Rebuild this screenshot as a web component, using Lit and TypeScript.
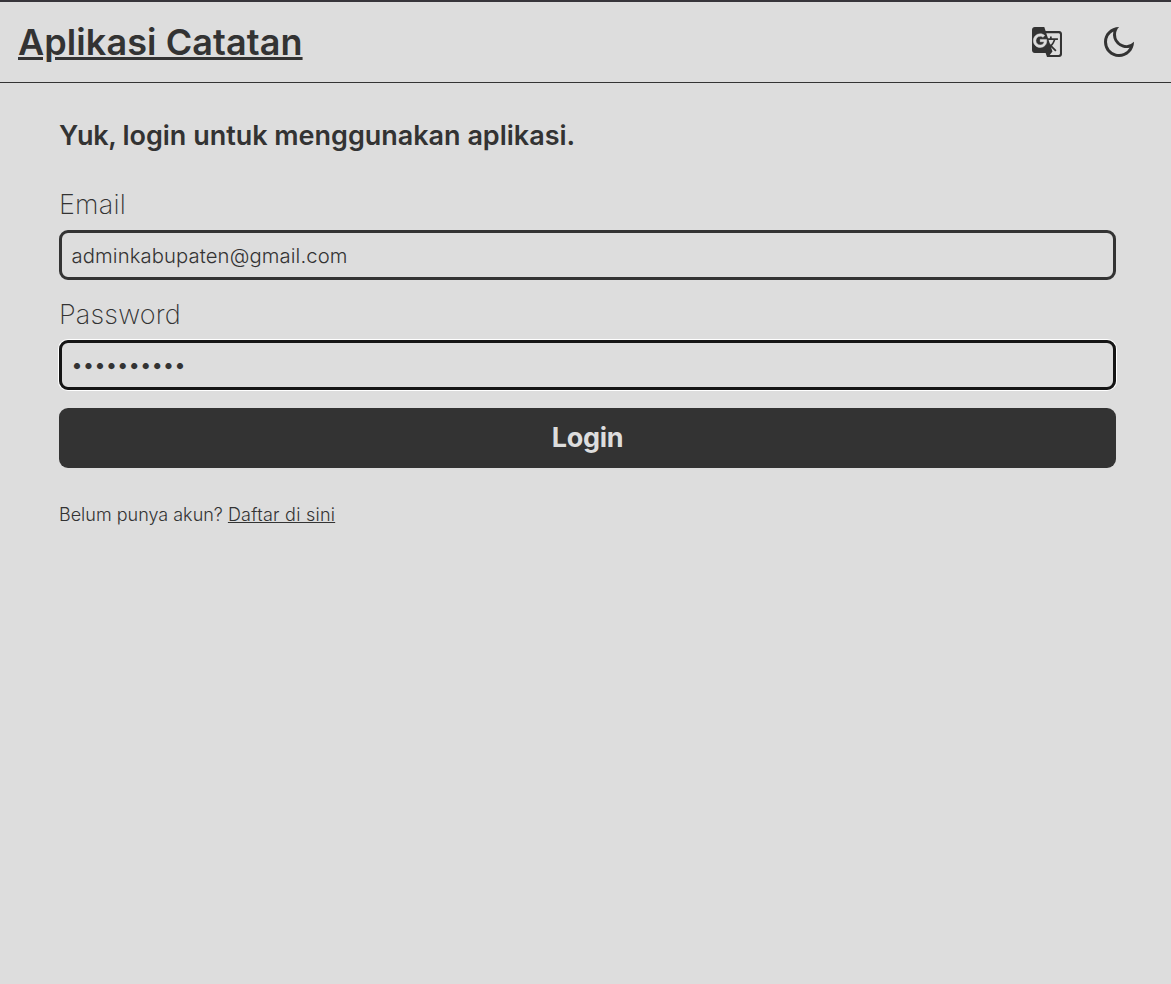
import { LitElement, html, css } from "lit";
import { customElement, state } from "lit/decorators.js";

@customElement("app-header")
class AppHeader extends LitElement {
  static styles = css`
    :host { display: block; }
    .bar {
      box-sizing: border-box;
      height: 83px;
      padding: 0 34px 0 18px;
      border-top: 2px solid #37353a;
      border-bottom: 1px solid #333;
      display: flex;
      align-items: center;
      justify-content: space-between;
    }
    .title { margin: 0; font-size: 36px; line-height: 44px; font-weight: 600; letter-spacing: 0.08px; }
    .title a { color: inherit; }
    .actions { display: flex; gap: 36px; }
    .icon {
      display: block;
      padding: 0;
      border: 0;
      background: none;
      color: inherit;
      width: 36px;
      height: 36px;
    }
    svg { display: block; width: 36px; height: 36px; fill: currentColor; }
    .glyph { fill: #ddd; stroke: #ddd; stroke-width: 0.35; }
  `;

  render() {
    return html`
      <header class="bar">
        <h1 class="title"><a href="#">Aplikasi Catatan</a></h1>
        <nav class="actions">
          <button class="icon">
            <svg viewBox="-1.2 -1.2 26.4 26.4">
              <path d="M21 4H11l-1-3H3c-1.1 0-2 .9-2 2v15c0 1.1.9 2 2 2h8l1 3h9c1.1 0 2-.9 2-2V6c0-1.1-.9-2-2-2zm-7.83 6.58h3.7c-.43 1.25-1.11 2.43-2.05 3.47-.31-.35-.6-.72-.86-1.1l-.79-2.37zm8.33 9.92c0 .55-.45 1-1 1H14l2-2.5-1.04-3.1 3.1 3.1.92-.92-3.3-3.25.02-.02c1.13-1.25 1.93-2.69 2.4-4.22H20v-1.3h-4.53V8h-1.29v1.29h-1.44L11.46 5.5h9.04c.55 0 1 .45 1 1v14z"/>
              <path class="glyph" d="M7 16c-2.76 0-5-2.24-5-5s2.24-5 5-5c1.35 0 2.48.5 3.35 1.3L9.03 8.57c-.38-.36-1.04-.78-2.03-.78-1.74 0-3.15 1.44-3.15 3.21S5.26 14.21 7 14.21c2.01 0 2.84-1.44 2.92-2.41H7v-1.71h4.68c.07.31.12.61.12 1.02C11.8 13.97 9.89 16 7 16z"/>
            </svg>
          </button>
          <button class="icon">
            <svg viewBox="0 0 24 24"><path d="M10 7a7 7 0 0 0 12 4.9v.1c0 5.523-4.477 10-10 10S2 17.523 2 12 6.477 2 12 2h.1A6.979 6.979 0 0 0 10 7zm-6 5a8 8 0 0 0 15.062 3.762A9 9 0 0 1 8.238 4.938 7.999 7.999 0 0 0 4 12z"/></svg>
          </button>
        </nav>
      </header>
    `;
  }
}

@customElement("app-root")
class AppRoot extends LitElement {
  @state() email = "adminkabupaten@gmail.com";
  @state() password = "rahasia123";

  static styles = css`
    :host {
      display: block;
      min-height: 100vh;
      background: #ddd;
      color: #333;
      font-family: Inter, sans-serif;
      font-size: 18px;
    }
    .page { padding: 36px 55px 0 59px; }
    .heading { margin: 0 0 36px; font-size: 27px; line-height: 33px; font-weight: 600; letter-spacing: -0.02px; }
    .lead { letter-spacing: -0.3px; }
    .form { display: flex; flex-direction: column; }
    .label { font-size: 27px; line-height: 33px; font-weight: 200; letter-spacing: 0.18px; margin-bottom: 9px; }
    .input {
      box-sizing: border-box;
      height: 50px;
      margin: 0 0 18px;
      padding: 10px 9px 9px 9.5px;
      border: 3px solid #333;
      border-radius: 9px;
      background: transparent;
      color: inherit;
      font: 300 20.25px Inter, sans-serif;
      letter-spacing: 0.11px;
      outline: none;
    }
    .focused {
      padding: 9px 8.6px;
      border-color: #151515;
      box-shadow: 0 0 0 1px #fff;
      font-size: 23px;
      letter-spacing: -1.5px;
    }
    .submit {
      height: 60px;
      padding: 0 0 2px;
      border: 0;
      border-radius: 9px;
      background: #333;
      color: #ddd;
      font: 700 27px Inter, sans-serif;
      letter-spacing: -0.3px;
    }
    .hint { margin: 36px 0 0; line-height: 22px; font-weight: 300; }
    .hint a { color: inherit; letter-spacing: 0.24px; }
  `;

  render() {
    return html`
      <app-header></app-header>
      <main class="page">
        <h2 class="heading"><span class="lead">Yuk, </span>login untuk menggunakan aplikasi.</h2>
        <div class="form">
          <label class="label" for="email">Email</label>
          <input class="input" id="email" type="email" .value=${this.email} />
          <label class="label" for="password">Password</label>
          <input class="input focused" id="password" type="password" .value=${this.password} />
          <button class="submit" type="button">Login</button>
        </div>
        <p class="hint">Belum punya akun? <a href="#">Daftar di sini</a></p>
      </main>
    `;
  }
}
